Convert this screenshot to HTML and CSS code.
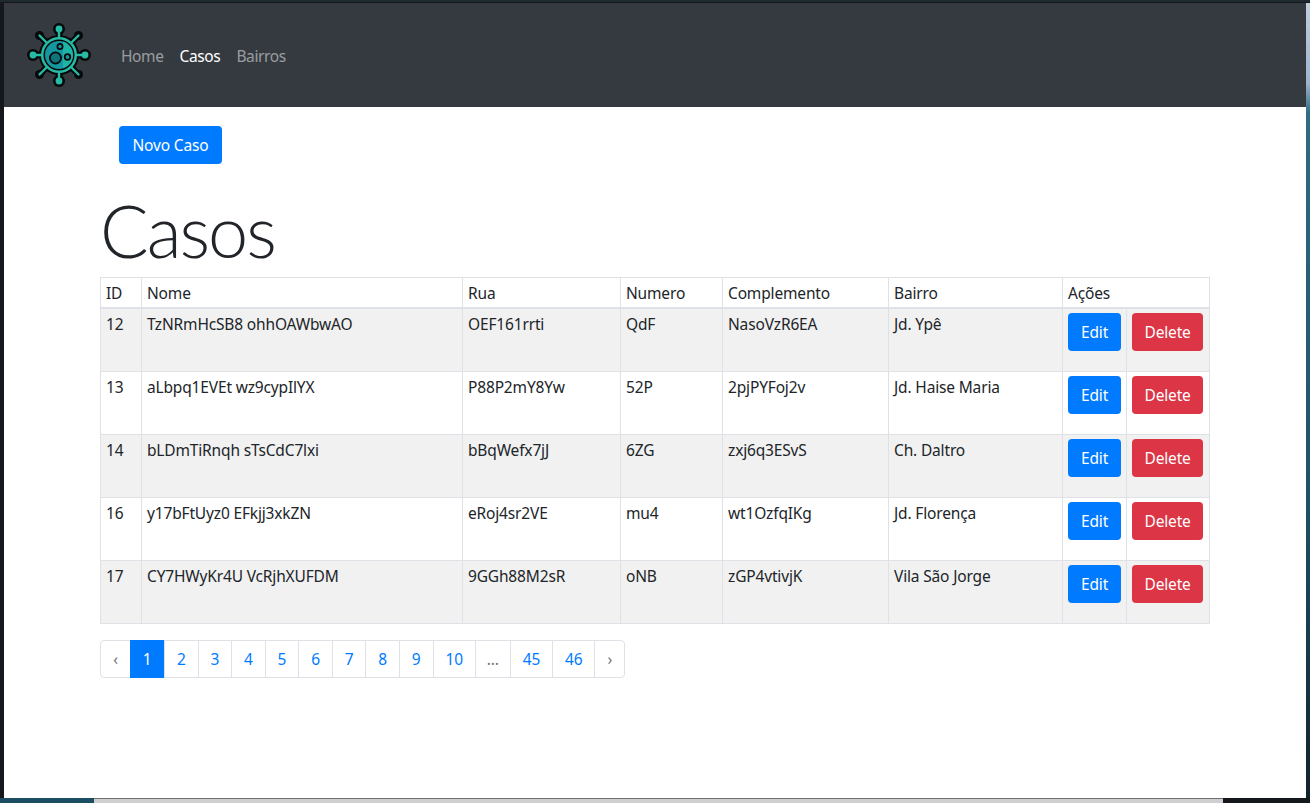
FILE: index.html
```html
<!DOCTYPE html>
<html lang="pt-BR">
<head>
<meta charset="utf-8">
<title>Casos</title>
<link rel="stylesheet" href="styles.css">
</head>
<body>
<div class="desk-top"></div>
<div class="middle">
  <div class="win">
    <nav class="navbar">
      <a class="brand" href="#">
        <svg class="logo" viewBox="0 0 64 64" width="64" height="64" aria-hidden="true">
          <g stroke="#06090a" stroke-width="6.5" stroke-linecap="round" fill="#06090a">
            <path d="M32 5V14M32 50V59M5 32H14M50 32H59M12.5 12.5L19 19M51.5 12.5L45 19M12.5 51.5L19 45M51.5 51.5L45 45"/>
          </g>
          <g fill="#06090a">
            <circle cx="32" cy="6" r="6"/><circle cx="32" cy="58" r="6"/><circle cx="6" cy="32" r="6"/><circle cx="58" cy="32" r="6"/>
            <circle cx="12.5" cy="12.5" r="4.5"/><circle cx="51.5" cy="12.5" r="4.5"/><circle cx="12.5" cy="51.5" r="4.5"/><circle cx="51.5" cy="51.5" r="4.5"/>
            <circle cx="32" cy="32" r="20"/>
          </g>
          <g stroke="#27bba6" stroke-width="2.4" stroke-linecap="round">
            <path d="M32 6V14M32 50V58M6 32H14M50 32H58M12.5 12.5L19 19M51.5 12.5L45 19M12.5 51.5L19 45M51.5 51.5L45 45"/>
          </g>
          <g fill="#27bba6">
            <circle cx="32" cy="6" r="3.4"/><circle cx="32" cy="58" r="3.4"/><circle cx="6" cy="32" r="3.4"/><circle cx="58" cy="32" r="3.4"/>
            <circle cx="32" cy="32" r="18"/>
          </g>
          <circle cx="32" cy="32" r="15.5" fill="#06090a"/>
          <circle cx="32" cy="32" r="14" fill="#1596a0"/>
          <path d="M36 18.6A14 14 0 0 1 43 40.5A14 14 0 0 1 36 45Z" fill="#1fb5a6"/>
          <circle cx="28.5" cy="35" r="5.6" fill="#0f7478" stroke="#06090a" stroke-width="1.8"/>
          <circle cx="33" cy="23.5" r="2.6" fill="#1596a0" stroke="#06090a" stroke-width="1.8"/>
          <circle cx="40.5" cy="34" r="2.8" fill="#1596a0" stroke="#06090a" stroke-width="1.8"/>
        </svg>
      </a>
      <ul class="nav-links">
        <li><a class="nav-link" href="#">Home</a></li>
        <li><a class="nav-link active" href="#">Casos</a></li>
        <li><a class="nav-link" href="#">Bairros</a></li>
      </ul>
    </nav>
    <main class="container">
      <div class="toolbar"><a class="btn btn-primary" href="#">Novo Caso</a></div>
      <h1 class="title">Casos</h1>
      <table class="table">
        <colgroup>
          <col class="c-id"><col class="c-nome"><col class="c-rua"><col class="c-num"><col class="c-comp"><col class="c-bairro"><col class="c-edit"><col class="c-del">
        </colgroup>
        <thead>
          <tr><th>ID</th><th>Nome</th><th>Rua</th><th>Numero</th><th>Complemento</th><th>Bairro</th><th colspan="2">Ações</th></tr>
        </thead>
        <tbody>
          <tr><td>12</td><td>TzNRmHcSB8 ohhOAWbwAO</td><td>OEF161rrti</td><td>QdF</td><td>NasoVzR6EA</td><td>Jd. Ypê</td><td class="act"><a class="btn btn-primary" href="#">Edit</a></td><td class="act"><a class="btn btn-danger" href="#">Delete</a></td></tr>
          <tr><td>13</td><td>aLbpq1EVEt wz9cypIlYX</td><td>P88P2mY8Yw</td><td>52P</td><td>2pjPYFoj2v</td><td>Jd. Haise Maria</td><td class="act"><a class="btn btn-primary" href="#">Edit</a></td><td class="act"><a class="btn btn-danger" href="#">Delete</a></td></tr>
          <tr><td>14</td><td>bLDmTiRnqh sTsCdC7lxi</td><td>bBqWefx7jJ</td><td>6ZG</td><td>zxj6q3ESvS</td><td>Ch. Daltro</td><td class="act"><a class="btn btn-primary" href="#">Edit</a></td><td class="act"><a class="btn btn-danger" href="#">Delete</a></td></tr>
          <tr><td>16</td><td>y17bFtUyz0 EFkjj3xkZN</td><td>eRoj4sr2VE</td><td>mu4</td><td>wt1OzfqIKg</td><td>Jd. Florença</td><td class="act"><a class="btn btn-primary" href="#">Edit</a></td><td class="act"><a class="btn btn-danger" href="#">Delete</a></td></tr>
          <tr><td>17</td><td>CY7HWyKr4U VcRjhXUFDM</td><td>9GGh88M2sR</td><td>oNB</td><td>zGP4vtivjK</td><td>Vila São Jorge</td><td class="act"><a class="btn btn-primary" href="#">Edit</a></td><td class="act"><a class="btn btn-danger" href="#">Delete</a></td></tr>
        </tbody>
      </table>
      <ul class="pagination">
        <li class="page page-prev"><a href="#">‹</a></li>
        <li class="page current"><a href="#">1</a></li>
        <li class="page"><a href="#">2</a></li>
        <li class="page"><a href="#">3</a></li>
        <li class="page"><a href="#">4</a></li>
        <li class="page"><a href="#">5</a></li>
        <li class="page"><a href="#">6</a></li>
        <li class="page"><a href="#">7</a></li>
        <li class="page"><a href="#">8</a></li>
        <li class="page"><a href="#">9</a></li>
        <li class="page"><a href="#">10</a></li>
        <li class="page page-gap"><a href="#">...</a></li>
        <li class="page"><a href="#">45</a></li>
        <li class="page"><a href="#">46</a></li>
        <li class="page page-next"><a href="#">›</a></li>
      </ul>
    </main>
  </div>
  <div class="desk-right"></div>
</div>
<div class="desk-bottom">
  <div class="sea"></div>
  <div class="taskwin"></div>
  <div class="rocks"></div>
</div>
</body>
</html>
```
FILE: styles.css
```css
* { box-sizing: border-box; }
html, body { height: 100%; }
body {
  margin: 0;
  height: 803px;
  overflow: hidden;
  display: flex;
  flex-direction: column;
  background: #14181c;
  font-family: "Noto Sans", "Liberation Sans", sans-serif;
  font-size: 15.5px;
  letter-spacing: -.16px;
  color: #212529;
}
a { text-decoration: none; }
ul { list-style: none; margin: 0; padding: 0; }

.desk-top { height: 3px; background: #1f2a30; border-bottom: 1px solid #14181c; flex: none; }
.middle { flex: none; height: 795px; display: flex; padding-left: 4px; }
.win { flex: none; width: 1302px; background: #fff; display: flex; flex-direction: column; }
.desk-right { flex: 1; background: linear-gradient(#c3cedb 0, #9fb4cc 80px, #2f6b82 110px, #1d5266 500px, #12222c 795px); }

.navbar { flex: none; height: 104px; background: #343a40; display: flex; align-items: center; padding: 2px 0 0 23px; }
.brand { display: block; height: 64px; margin-right: 14px; }
.logo { display: block; margin-top: -1px; }
.nav-links { display: flex; margin-left: 8px; letter-spacing: -.38px; }
.nav-link { display: block; padding: 8px; color: rgba(255,255,255,.5); line-height: 24px; }
.nav-link.active { color: #fff; }

.container { width: 1109px; margin-left: 96px; flex: 1; }
.toolbar { padding: 19px 0 0 19px; height: 57px; }
.btn { display: inline-block; height: 38px; padding: 0 13px; line-height: 38px; border-radius: 4px; color: #fff; white-space: nowrap; }
.toolbar .btn { padding: 0 13.5px; }
.btn-primary { background: #007bff; }
.btn-danger { background: #dc3545; padding: 0 12.5px; }
.title { margin: 14px 0 0; height: 99px; font-family: "Lato", "Noto Sans", sans-serif; font-size: 72px; line-height: 104px; font-weight: 300; letter-spacing: -2px; color: #212529; }

.table { width: 1109px; border-collapse: collapse; table-layout: fixed; border: 1px solid #dee2e6; }
.c-id { width: 41px; } .c-nome { width: 321px; } .c-rua { width: 158px; } .c-num { width: 102px; }
.c-comp { width: 166px; } .c-bairro { width: 174px; } .c-edit { width: 64px; } .c-del { width: 83px; }
.table th, .table td { border: 1px solid #dee2e6; padding: 5px; text-align: left; vertical-align: top; font-weight: 400; line-height: 20px; }
.table th { height: 29px; padding-bottom: 4px; border-bottom-width: 2px; }
.table td { height: 63px; }
.table td.act { padding-top: 4px; }
.table tbody tr:nth-child(odd) { background: #f1f1f1; }

.pagination { display: flex; margin-top: 16px; height: 38px; width: max-content; border: 1px solid #dee2e6; border-radius: 4px; }
.page { border-left: 1px solid #dee2e6; }
.page:first-child { border-left: 0; }
.page a { display: block; padding: 0 11.93px; line-height: 36px; text-align: center; color: #007bff; }
.page-prev a, .page-next a { width: 29px; padding: 0; color: #6c757d; }
.page-gap a { color: #6c757d; padding: 0 11px; }
.page.current { border-left: 0; margin: -1px 0; }
.page.current a { background: #007bff; color: #fff; line-height: 38px; width: 34px; padding: 0; }

.desk-bottom { flex: 1; display: flex; }
.sea { width: 94px; background: #1b4e62; }
.taskwin { width: 1129px; background: #cfcfcf; border-top: 1px solid #6f6f6f; }
.rocks { flex: 1; background: #14181c; }
```
